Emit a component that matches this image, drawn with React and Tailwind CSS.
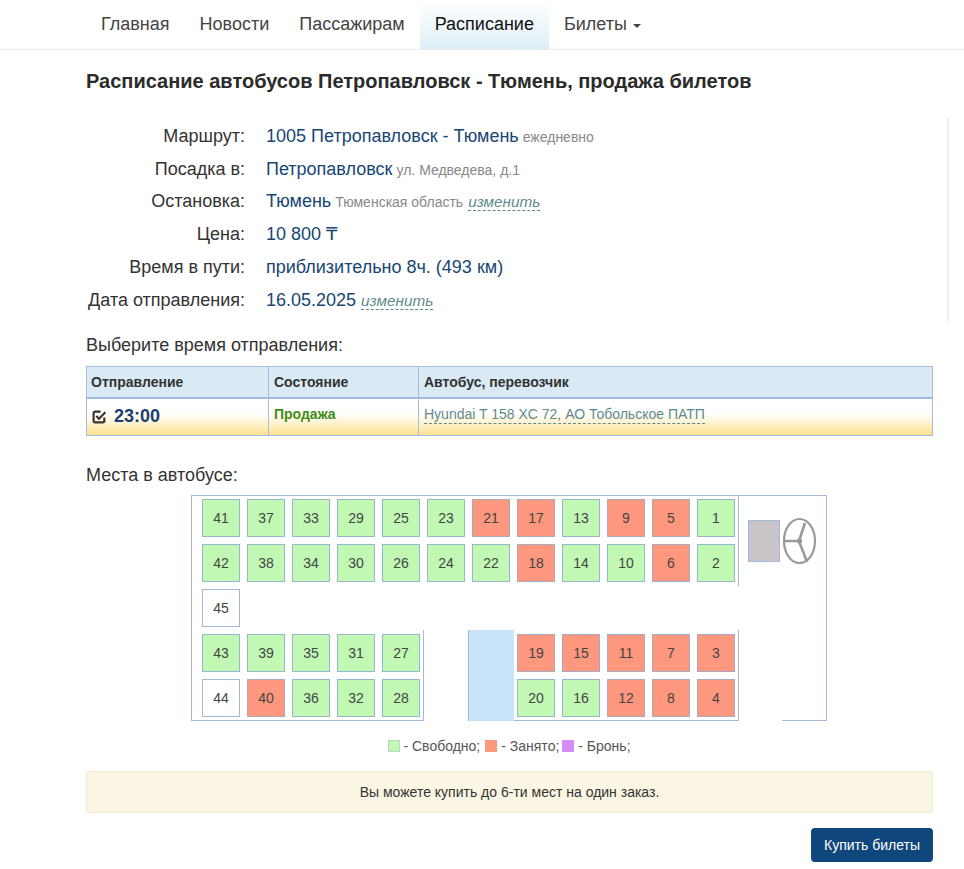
import React from "react";

const nav = ["Главная", "Новости", "Пассажирам", "Расписание"];

const rows = [
  [["41","f"],["37","f"],["33","f"],["29","f"],["25","f"],["23","f"],["21","b"],["17","b"],["13","f"],["9","b"],["5","b"],["1","f"]],
  [["42","f"],["38","f"],["34","f"],["30","f"],["26","f"],["24","f"],["22","f"],["18","b"],["14","f"],["10","f"],["6","b"],["2","f"]],
  [["45","e"],null,null,null,null,null,null,null,null,null,null,null],
  [["43","f"],["39","f"],["35","f"],["31","f"],["27","f"],null,null,["19","b"],["15","b"],["11","b"],["7","b"],["3","b"]],
  [["44","e"],["40","b"],["36","f"],["32","f"],["28","f"],null,null,["20","f"],["16","f"],["12","b"],["8","b"],["4","b"]],
];

const seatClass = {
  f: "bg-[#c0f8b4] border-[#95b8cf]",
  b: "bg-[#fd987f] border-[#a9a9c4]",
  e: "bg-white border-[#a3b9da]",
};

function Seat({ n, kind }) {
  return (
    <div className={`w-[38px] h-[38px] border flex items-center justify-center text-[14px] text-[#444] ${seatClass[kind]}`}>
      {n}
    </div>
  );
}

function Change() {
  return <span className="ml-[1px] text-[15.3px] italic text-[#5f8a8b] border-b border-dashed border-[#5f8a8b] leading-[16px] inline-block">изменить</span>;
}

function InfoRow({ label, children }) {
  return (
    <div className="flex h-[32.8px] items-center">
      <div className="w-[159px] text-right text-[#333] text-[18px] whitespace-nowrap">{label}</div>
      <div className="ml-[21px] text-[18px] text-[#174673] flex items-baseline gap-[4px] whitespace-nowrap">{children}</div>
    </div>
  );
}

function Note({ children }) {
  return <span className="text-[14px] text-[#888]">{children}</span>;
}

function Wheel() {
  return (
    <svg width="36" height="48" viewBox="0 0 36 48" className="absolute left-[590px] top-[21px]">
      <ellipse cx="17.5" cy="24" rx="15.5" ry="22" fill="none" stroke="#999999" strokeWidth="2.2" />
      <path d="M17 24 L2 24 M17 24 L23 6 M17 24 L25 45" stroke="#999999" strokeWidth="2.6" fill="none" />
      <path d="M14 24 L18 19.5 L20.5 24 L18 28.5 Z" fill="#999999" />
    </svg>
  );
}

export default function App() {
  return (
    <div className="w-[964px] h-[869px] overflow-hidden bg-white font-['Liberation_Sans',Arial,sans-serif] text-[#333]">
      <nav className="h-[50px] border-b border-[#e5ebef] pl-[86px] flex">
        {nav.map((t) => (
          <div
            key={t}
            className={`h-[49px] px-[15px] flex items-center text-[18px] ${
              t === "Расписание" ? "text-[#111] bg-gradient-to-b from-white to-[#dfeff6]" : "text-[#444]"
            }`}
          >
            {t}
          </div>
        ))}
        <div className="h-[49px] px-[15px] flex items-center text-[18px] text-[#444]">
          Билеты
          <span className="ml-[6px] mt-[2px] w-0 h-0 border-x-[4px] border-x-transparent border-t-[4px] border-t-[#444]" />
        </div>
      </nav>

      <main className="pl-[86px] w-[933px]">
        <h1 className="mt-[19px] text-[20px] leading-[24px] font-bold text-[#2b2b2b]">
          Расписание автобусов Петропавловск - Тюмень, продажа билетов
        </h1>

        <div className="mt-[24px] relative w-[863px] border-r-2 border-[#eeeeee] h-[204px] pt-[3px]">
          <InfoRow label="Маршрут:">
            1005 Петропавловск - Тюмень <Note>ежедневно</Note>
          </InfoRow>
          <InfoRow label="Посадка в:">
            Петропавловск <Note>ул. Медведева, д.1</Note>
          </InfoRow>
          <InfoRow label="Остановка:">
            Тюмень <Note>Тюменская область</Note> <Change />
          </InfoRow>
          <InfoRow label="Цена:">
            <span className="font-['Liberation_Sans','DejaVu_Sans',sans-serif]">10 800 ₸</span>
          </InfoRow>
          <InfoRow label="Время в пути:">приблизительно 8ч. (493 км)</InfoRow>
          <InfoRow label="Дата отправления:">
            16.05.2025 <Change />
          </InfoRow>
        </div>

        <div className="mt-[14px] text-[18px] leading-[20px] text-[#333]">Выберите время отправления:</div>

        <div className="mt-[11px] w-[847px] border border-[#a4bfdc]">
          <div className="flex h-[32px] bg-[#d9eaf4] border-b-2 border-[#9fbce0] text-[14px] font-bold text-[#333]">
            <div className="w-[182px] border-r border-[#a4bfdc] pl-[4px] flex items-center">Отправление</div>
            <div className="w-[150px] border-r border-[#a4bfdc] pl-[5px] flex items-center">Состояние</div>
            <div className="flex-1 pl-[5px] flex items-center">Автобус, перевозчик</div>
          </div>
          <div className="flex h-[36px] bg-gradient-to-b from-white from-40% to-[#ffe28e]">
            <div className="w-[182px] border-r border-[#a4bfdc] pl-[5px] flex items-center gap-[7px] pb-[1px]">
              <svg width="15" height="15" viewBox="0 0 14 14" fill="none" stroke="#333" strokeWidth="2">
                <path d="M11.5 8 V11 Q11.5 12.5 10 12.5 H3 Q1.5 12.5 1.5 11 V4 Q1.5 2.5 3 2.5 H8" />
                <path d="M4 6.5 L6.5 9 L12.5 3" />
              </svg>
              <span className="text-[18px] font-bold text-[#17406f]">23:00</span>
            </div>
            <div className="w-[150px] border-r border-[#a4bfdc] pl-[5px] pt-[5px] text-[14px] font-bold text-[#3f8c12]">Продажа</div>
            <div className="flex-1 pl-[5px] pt-[5px] text-[14px] text-[#5f8a8b]">
              <span className="border-b border-dashed border-[#5f8a8b] inline-block leading-[17px]">Hyundai T 158 XC 72, АО Тобольское ПАТП</span>
            </div>
          </div>
        </div>

        <div className="mt-[29px] text-[18px] leading-[20px] text-[#333]">Места в автобусе:</div>

        <div className="mt-[10px] ml-[105px] w-[636px] h-[226px] relative border-t border-l border-r border-[#a3b9da] pl-[10px] pt-[3px]">
          <span className="absolute left-[-1px] bottom-0 w-[233px] h-px bg-[#a3b9da]" />
          <span className="absolute left-[231px] top-[134px] bottom-0 w-px bg-[#a3b9da]" />
          <span className="absolute left-[276px] bottom-0 w-[271px] h-px bg-[#a3b9da]" />
          <span className="absolute left-[276px] top-[134px] bottom-0 w-px bg-[#a3b9da]" />
          <span className="absolute left-[546px] top-[134px] bottom-0 w-px bg-[#a3b9da]" />
          <span className="absolute left-[546px] top-0 h-[90px] w-px bg-[#a3b9da]" />
          <span className="absolute left-[590px] right-0 bottom-0 h-px bg-[#a3b9da]" />
          <span className="absolute left-[277px] top-[134px] bottom-0 w-[45px] bg-[#c9e3f8]" />

          <div className="relative grid grid-cols-[repeat(12,38px)] auto-rows-[38px] gap-[7px]">
            {rows.flat().map((s, i) =>
              s ? <Seat key={i} n={s[0]} kind={s[1]} /> : <div key={i} />
            )}
          </div>

          <div className="absolute left-[556px] top-[24px] w-[32px] h-[42px] bg-[#c8c4c8] border border-[#a3b9da]" />
          <Wheel />
        </div>

        <div className="mt-[17px] ml-[100px] w-[647px] flex items-center justify-center text-[14px] text-[#555] leading-[16px]">
          <span className="w-[12px] h-[12px] bg-[#c0f8b4] border border-[#b5d8c0] mr-[3px]" />
          <span>- Свободно;</span>
          <span className="w-[12px] h-[12px] bg-[#fd987f] ml-[5px] mr-[4px]" />
          <span>- Занято;</span>
          <span className="w-[12px] h-[12px] bg-[#d58cf5] ml-[3px] mr-[4px]" />
          <span>- Бронь;</span>
        </div>

        <div className="mt-[17px] w-[847px] h-[42px] bg-[#fbf6e3] border border-[#f5eccf] flex items-center justify-center text-[14px] text-[#333]">
          Вы можете купить до 6-ти мест на один заказ.
        </div>

        <div className="mt-[15px] w-[847px] flex justify-end">
          <button className="w-[122px] h-[34px] rounded-[4px] bg-[#0f467c] text-white text-[14px] flex items-center justify-center">
            Купить билеты
          </button>
        </div>
      </main>
    </div>
  );
}
